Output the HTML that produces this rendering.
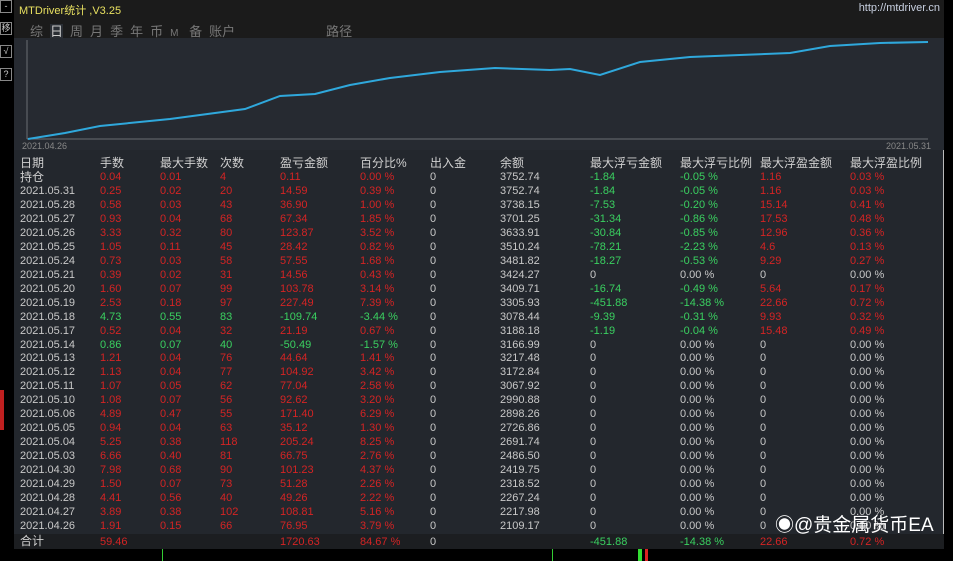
<!DOCTYPE html>
<html><head><meta charset="utf-8"><style>
*{margin:0;padding:0;box-sizing:border-box}
body{width:953px;height:561px;background:#000;overflow:hidden;position:relative;font-family:"Liberation Sans","Noto Sans CJK SC",sans-serif;font-size:11px;color:#c8c8c8}
.win{position:absolute;left:14px;top:0;width:930px;height:549px;background:#23272d;border-right:1px solid #bbb;border-bottom:1px solid #888}
.title{position:absolute;left:0;top:0;width:930px;height:38px;background:#1b1b1b}
.t1{position:absolute;left:5px;top:2px;color:#e8e060;font-size:11px}
.url{position:absolute;right:4px;top:2px;color:#c8d0e0;font-size:11px}
.tabs{position:absolute;left:16px;top:21px;color:#777;font-size:13px;letter-spacing:0}
.tabs span{margin-right:7px}
.chart{position:absolute;left:0;top:38px;width:930px;height:112px;background:#262a31}
.r{position:absolute;left:0;width:930px;height:14px;line-height:14px}
.r span{position:absolute;top:0;white-space:nowrap}
.R{color:#d42424}.G{color:#3ad060}
.hd{font-size:12px;color:#d0d0d0}
.tot{background:#1c1e21}
.btn{position:absolute;left:0;width:12px;height:13px;border:1px solid #888;color:#ccc;font-size:9px;text-align:center;line-height:11px}
</style></head><body>
<div class="btn" style="top:0">-</div>
<div class="btn" style="top:22px">移</div>
<div class="btn" style="top:45px">√</div>
<div class="btn" style="top:68px">?</div>
<div style="position:absolute;left:0;top:390px;width:4px;height:40px;background:#c02020"></div>
<div class="win">
<div class="title"><div class="t1">MTDriver统计 ,V3.25</div><div class="url">http://mtdriver.cn</div>
<div class="tabs"><span>综</span><span style="color:#ccc;background:#2a2e34">日</span><span>周</span><span>月</span><span>季</span><span>年</span><span>币</span><span style="font-size:10px">M</span> <span>备</span><span>账户</span><span style="margin-left:84px">路径</span></div></div>
<div class="chart">
<svg width="930" height="112" style="position:absolute;left:0;top:0">
<line x1="13" y1="101" x2="914" y2="101" stroke="#6a6e74" stroke-width="1"/>
<line x1="13" y1="2" x2="13" y2="101" stroke="#6a6e74" stroke-width="1"/>
<polyline fill="none" stroke="#2fa8dc" stroke-width="2" points="14,101 51,95 86,88 156,81 231,71 266,58 301,56 336,47 376,40 426,34 481,30 536,32 556,31 586,37 626,24 676,19 726,17 776,15 816,8 866,5 914,4"/>
<text x="8" y="111" fill="#888" font-size="9" font-family="Liberation Sans">2021.04.26</text>
<text x="872" y="111" fill="#888" font-size="9" font-family="Liberation Sans">2021.05.31</text>
</svg></div>
<div id="t"></div>
</div>
<div style="position:absolute;left:775px;top:510px;color:#fff;font-size:19px;font-family:'Liberation Sans','Noto Sans CJK SC',sans-serif">&#9673;@贵金属货币EA</div>
<div style="position:absolute;left:162px;top:549px;width:1px;height:12px;background:#3c3"></div>
<div style="position:absolute;left:552px;top:549px;width:1px;height:12px;background:#3c3"></div>
<div style="position:absolute;left:638px;top:549px;width:4px;height:12px;background:#3d3"></div>
<div style="position:absolute;left:645px;top:549px;width:3px;height:12px;background:#d22"></div>
<script>
const X=[6,86,146,206,266,346,416,486,576,666,746,836];
const rows=[
["持仓","0.04","0.01","4","0.11","0.00 %","0","3752.74","-1.84","-0.05 %","1.16","0.03 %"],
["2021.05.31","0.25","0.02","20","14.59","0.39 %","0","3752.74","-1.84","-0.05 %","1.16","0.03 %"],
["2021.05.28","0.58","0.03","43","36.90","1.00 %","0","3738.15","-7.53","-0.20 %","15.14","0.41 %"],
["2021.05.27","0.93","0.04","68","67.34","1.85 %","0","3701.25","-31.34","-0.86 %","17.53","0.48 %"],
["2021.05.26","3.33","0.32","80","123.87","3.52 %","0","3633.91","-30.84","-0.85 %","12.96","0.36 %"],
["2021.05.25","1.05","0.11","45","28.42","0.82 %","0","3510.24","-78.21","-2.23 %","4.6","0.13 %"],
["2021.05.24","0.73","0.03","58","57.55","1.68 %","0","3481.82","-18.27","-0.53 %","9.29","0.27 %"],
["2021.05.21","0.39","0.02","31","14.56","0.43 %","0","3424.27","0","0.00 %","0","0.00 %"],
["2021.05.20","1.60","0.07","99","103.78","3.14 %","0","3409.71","-16.74","-0.49 %","5.64","0.17 %"],
["2021.05.19","2.53","0.18","97","227.49","7.39 %","0","3305.93","-451.88","-14.38 %","22.66","0.72 %"],
["2021.05.18","4.73","0.55","83","-109.74","-3.44 %","0","3078.44","-9.39","-0.31 %","9.93","0.32 %"],
["2021.05.17","0.52","0.04","32","21.19","0.67 %","0","3188.18","-1.19","-0.04 %","15.48","0.49 %"],
["2021.05.14","0.86","0.07","40","-50.49","-1.57 %","0","3166.99","0","0.00 %","0","0.00 %"],
["2021.05.13","1.21","0.04","76","44.64","1.41 %","0","3217.48"],
["2021.05.12","1.13","0.04","77","104.92","3.42 %","0","3172.84"],
["2021.05.11","1.07","0.05","62","77.04","2.58 %","0","3067.92"],
["2021.05.10","1.08","0.07","56","92.62","3.20 %","0","2990.88"],
["2021.05.06","4.89","0.47","55","171.40","6.29 %","0","2898.26"],
["2021.05.05","0.94","0.04","63","35.12","1.30 %","0","2726.86"],
["2021.05.04","5.25","0.38","118","205.24","8.25 %","0","2691.74"],
["2021.05.03","6.66","0.40","81","66.75","2.76 %","0","2486.50"],
["2021.04.30","7.98","0.68","90","101.23","4.37 %","0","2419.75"],
["2021.04.29","1.50","0.07","73","51.28","2.26 %","0","2318.52"],
["2021.04.28","4.41","0.56","40","49.26","2.22 %","0","2267.24"],
["2021.04.27","3.89","0.38","102","108.81","5.16 %","0","2217.98"],
["2021.04.26","1.91","0.15","66","76.95","3.79 %","0","2109.17"]];
let h='<div class="r hd" style="top:156px">'+["日期","手数","最大手数","次数","盈亏金额","百分比%","出入金","余额","最大浮亏金额","最大浮亏比例","最大浮盈金额","最大浮盈比例"].map((t,i)=>`<span style="left:${X[i]}px">${t}</span>`).join('')+'</div>';
rows.forEach((r,k)=>{if(r.length<12)r=r.concat(["0","0.00 %","0","0.00 %"]);
const top=170+k*13.96;const green=r[4][0]=='-';
h+=`<div class="r" style="top:${top}px">`+r.map((t,i)=>{let c='';
if(i>=1&&i<=5)c=green?'G':'R';
if(i==8||i==9)c=t[0]=='-'?'G':'';
if(i>=10)c=(t=="0"||t=="0.00 %")?'':'R';
if(i==0&&k==0)c='hd';
return `<span class="${c}" style="left:${X[i]}px">${t}</span>`}).join('')+'</div>';});
h+='<div class="r tot hd" style="top:534px;height:15px"><span style="left:6px">合计</span></div><div class="r" style="top:535px"><span class="R" style="left:86px">59.46</span><span class="R" style="left:266px">1720.63</span><span class="R" style="left:346px">84.67 %</span><span style="left:416px">0</span><span class="G" style="left:576px">-451.88</span><span class="G" style="left:666px">-14.38 %</span><span class="R" style="left:746px">22.66</span><span class="R" style="left:836px">0.72 %</span></div>';
document.getElementById('t').innerHTML=h;
</script>
</body></html>
